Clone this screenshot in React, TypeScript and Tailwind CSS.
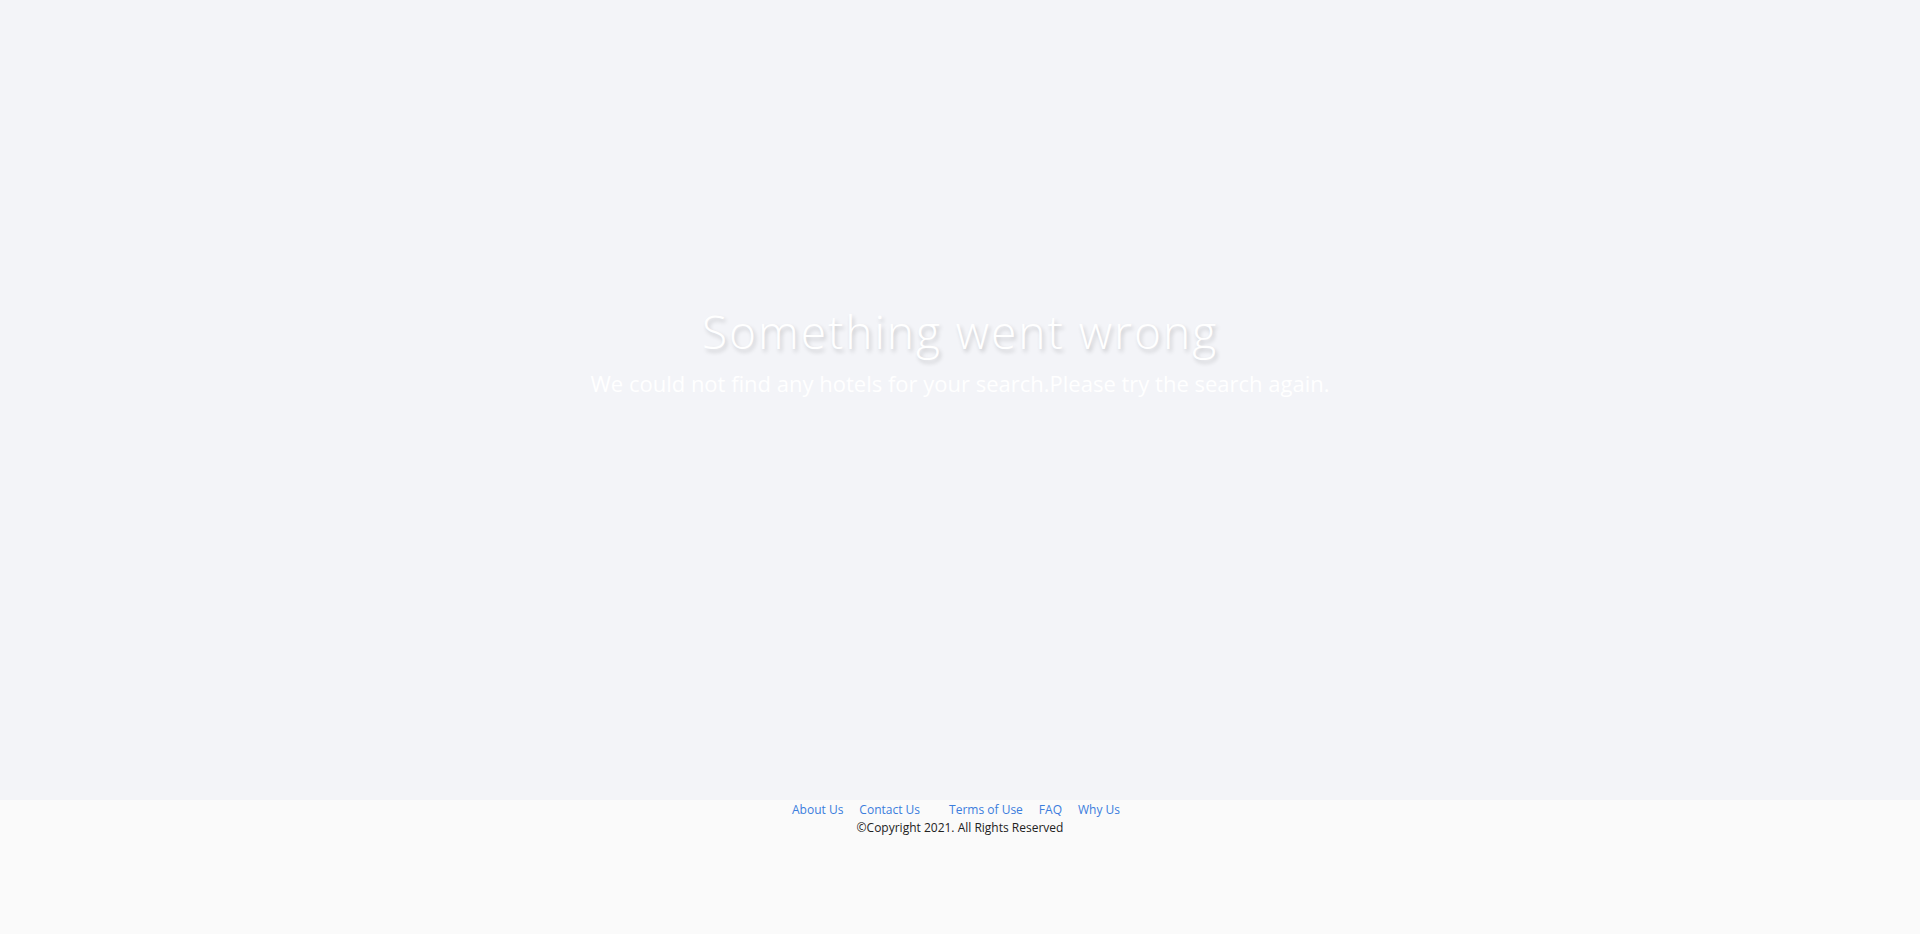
import React from 'react';

const links = ['About Us', 'Contact Us', 'Terms of Use', 'FAQ', 'Why Us'];

const App: React.FC = () => {
  return (
    <div className="min-h-[934px] flex flex-col font-['Open_Sans',sans-serif]">
      <main className="h-[800px] bg-[#f3f4f8] flex flex-col items-center pt-[300px]">
        <h1 className="text-[46px] leading-[62px] font-light tracking-[2px] text-white [text-shadow:2px_3px_4px_rgba(0,0,0,0.18)]">
          Something went wrong
        </h1>
        <p className="mt-[6px] text-[22px] leading-[30px] text-white">
          We could not find any hotels for your search.Please try the search again.
        </p>
      </main>
      <footer className="flex-grow bg-[#fafafa] flex flex-col items-center pt-[1px]">
        <ul className="flex text-[12px] leading-[17px] text-[#3b7ddd]">
          {links.map((l, i) => (
            <li key={l} className={i === 1 ? 'mr-[29px]' : i === links.length - 1 ? 'mr-2' : 'mr-4'}>
              <a href="#">{l}</a>
            </li>
          ))}
        </ul>
        <p className="mt-[1px] text-[12px] leading-[17px] text-[#222]">©Copyright 2021. All Rights Reserved</p>
      </footer>
    </div>
  );
};

export default App;
